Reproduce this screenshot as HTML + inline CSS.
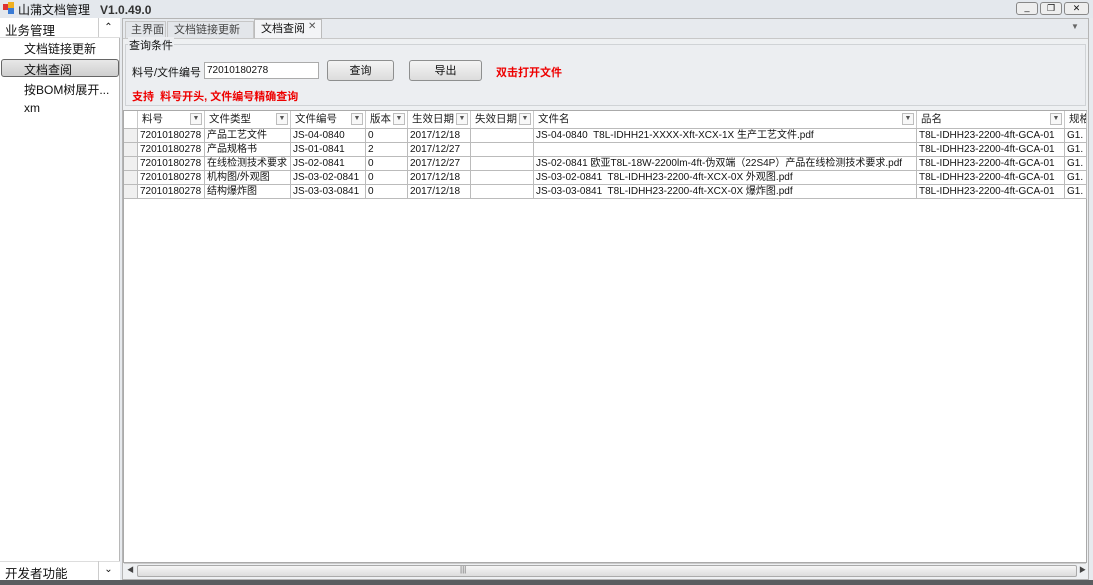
<!DOCTYPE html>
<html><head><meta charset="utf-8"><style>
*{box-sizing:border-box;margin:0;padding:0}
body{width:1093px;height:585px;overflow:hidden;background:#e7eaee;font-family:"Liberation Sans","Noto Sans CJK SC",sans-serif;font-size:11px;color:#111;position:relative}
.a{position:absolute}
.btn{position:absolute;border:1px solid #8e8f8f;border-radius:3px;background:linear-gradient(#f4f4f4,#dcdcdc);text-align:center;line-height:20px;font-size:11px}
.hd{position:absolute;top:111px;height:17px;border-right:1px solid #c9c9c9;line-height:16px;padding-left:4px;background:#fff;font-size:10.5px;color:#222}
.dd{position:absolute;right:2px;top:2px;width:12px;height:12px;border:1px solid #bdbdbd;background:#f8f8f8;font-size:7px;line-height:10px;text-align:center;color:#555}
.cell{position:absolute;height:14px;border-right:1px solid #bbb;border-bottom:1px solid #bbb;line-height:13px;padding-left:2px;white-space:nowrap;overflow:hidden;font-size:10px}
</style></head><body>
<div class="a" style="left:0;top:0;width:1093px;height:18px;background:#e4e8ed"></div>
<div class="a" style="left:3px;top:4px;width:6px;height:6px;background:#d33"></div>
<div class="a" style="left:8px;top:2px;width:6px;height:6px;background:#f0b020"></div>
<div class="a" style="left:8px;top:8px;width:6px;height:6px;background:#3a7bd5"></div>
<div class="a" style="left:18px;top:1px;font-size:12px">山蒲文档管理&nbsp;&nbsp;&nbsp;<b style="color:#333">V1.0.49.0</b></div>
<div class="a" style="left:1016px;top:2px;width:22px;height:13px;border:1px solid #888;border-radius:3px;background:#eee;font-size:9px;text-align:center;line-height:9px">_</div>
<div class="a" style="left:1040px;top:2px;width:22px;height:13px;border:1px solid #888;border-radius:3px;background:#eee;font-size:9px;text-align:center;line-height:11px">❐</div>
<div class="a" style="left:1064px;top:2px;width:25px;height:13px;border:1px solid #888;border-radius:3px;background:#eee;font-size:9px;text-align:center;line-height:11px">✕</div>
<div class="a" style="left:0;top:18px;width:120px;height:562px;background:#fff;border-right:1px solid #b8b8b8"></div>
<div class="a" style="left:0;top:18px;width:120px;height:20px;background:#fff;border-bottom:1px solid #ddd"></div>
<div class="a" style="left:5px;top:20px;font-size:12.5px">业务管理</div>
<div class="a" style="left:98px;top:18px;width:20px;height:19px;border-left:1px solid #ccc;text-align:center;font-size:10px;line-height:19px">⌃</div>
<div class="a" style="left:24px;top:40px;font-size:12px">文档链接更新</div>
<div class="a" style="left:1px;top:59px;width:118px;height:18px;border:1px solid #666;border-radius:3px;background:linear-gradient(#e8e8e8,#cfcfcf)"></div>
<div class="a" style="left:24px;top:61px;font-size:12px">文档查阅</div>
<div class="a" style="left:24px;top:81px;font-size:12px">按BOM树展开...</div>
<div class="a" style="left:24px;top:101px;font-size:12px">xm</div>
<div class="a" style="left:0;top:561px;width:120px;height:19px;border-top:1px solid #ddd;background:#fff"></div>
<div class="a" style="left:5px;top:563px;font-size:12.5px">开发者功能</div>
<div class="a" style="left:98px;top:561px;width:20px;height:19px;border-left:1px solid #ccc;text-align:center;font-size:10px;line-height:17px">⌄</div>
<div class="a" style="left:122px;top:18px;width:967px;height:562px;background:#e7eaee;border:1px solid #b5b5b5"></div>
<div class="a" style="left:125px;top:21px;width:41px;height:17px;border:1px solid #c6c6c6;border-bottom:none;background:#e3e6ea;padding-left:5px;line-height:17px;color:#444">主界面</div>
<div class="a" style="left:167px;top:21px;width:87px;height:17px;border:1px solid #c6c6c6;border-bottom:none;background:#e3e6ea;padding-left:6px;line-height:17px;color:#444">文档链接更新</div>
<div class="a" style="left:254px;top:19px;width:68px;height:20px;border:1px solid #bbb;border-bottom:none;background:#f3f4f6;padding-left:6px;line-height:19px;white-space:nowrap">文档查阅</div>
<div class="a" style="left:308px;top:21px;color:#555;font-size:10px">✕</div>
<div class="a" style="left:1071px;top:22px;font-size:8px;color:#666">▼</div>
<div class="a" style="left:123px;top:38px;width:965px;height:541px;background:#eef0f2;border-top:1px solid #c8c8c8"></div>
<div class="a" style="left:125px;top:44px;width:961px;height:62px;border:1px solid #d0d3d6;background:#eceef1"></div>
<div class="a" style="left:128px;top:37px;background:#eceef1;padding:0 1px">查询条件</div>
<div class="a" style="left:132px;top:64px">料号/文件编号</div>
<div class="a" style="left:204px;top:62px;width:115px;height:17px;border:1px solid #ababab;background:#fff;padding-left:2px;line-height:15px;font-size:10px">72010180278</div>
<div class="btn" style="left:327px;top:60px;width:67px;height:21px">查询</div>
<div class="btn" style="left:409px;top:60px;width:73px;height:21px">导出</div>
<div class="a" style="left:496px;top:64px;color:#e00;font-weight:bold">双击打开文件</div>
<div class="a" style="left:132px;top:88px;color:#e00;font-weight:bold">支持&nbsp; 料号开头, 文件编号精确查询</div>
<div class="a" style="left:123px;top:110px;width:964px;height:453px;background:#fff;border:1px solid #aaa"></div>
<div class="hd" style="left:124px;width:14px"></div>
<div class="hd" style="left:138px;width:67px">料号<div class="dd">▼</div></div>
<div class="hd" style="left:205px;width:86px">文件类型<div class="dd">▼</div></div>
<div class="hd" style="left:291px;width:75px">文件编号<div class="dd">▼</div></div>
<div class="hd" style="left:366px;width:42px">版本<div class="dd">▼</div></div>
<div class="hd" style="left:408px;width:63px">生效日期<div class="dd">▼</div></div>
<div class="hd" style="left:471px;width:63px">失效日期<div class="dd">▼</div></div>
<div class="hd" style="left:534px;width:383px">文件名<div class="dd">▼</div></div>
<div class="hd" style="left:917px;width:148px">品名<div class="dd">▼</div></div>
<div class="hd" style="left:1065px;width:22px;overflow:hidden;white-space:nowrap">规格</div>
<div class="a" style="left:124px;top:128px;width:963px;height:1px;background:#bbb"></div>
<div id="rows"></div>
<script>
var d=[["产品工艺文件","JS-04-0840","0","2017/12/18","JS-04-0840&nbsp; T8L-IDHH21-XXXX-Xft-XCX-1X 生产工艺文件.pdf"],
["产品规格书","JS-01-0841","2","2017/12/27",""],
["在线检测技术要求","JS-02-0841","0","2017/12/27","JS-02-0841 欧亚T8L-18W-2200lm-4ft-伪双端（22S4P）产品在线检测技术要求.pdf"],
["机构图/外观图","JS-03-02-0841","0","2017/12/18","JS-03-02-0841&nbsp; T8L-IDHH23-2200-4ft-XCX-0X 外观图.pdf"],
["结构爆炸图","JS-03-03-0841","0","2017/12/18","JS-03-03-0841&nbsp; T8L-IDHH23-2200-4ft-XCX-0X 爆炸图.pdf"]];
var cols=[[124,14],[138,67],[205,86],[291,75],[366,42],[408,63],[471,63],[534,383],[917,148],[1065,22]];
var h="";
d.forEach(function(r,i){var y=129+i*14;var v=["","72010180278",r[0],r[1],r[2],r[3],"",r[4],"T8L-IDHH23-2200-4ft-GCA-01","G1."];
cols.forEach(function(c,j){h+='<div class="cell" style="left:'+c[0]+'px;top:'+y+'px;width:'+c[1]+'px;'+(j==0?'background:#f0f0f0;':'')+'">'+v[j]+'</div>';});});
document.getElementById("rows").innerHTML=h;
</script>
<div class="a" style="left:124px;top:563px;width:962px;height:15px;background:#eef0f2;border-top:1px solid #ccc"></div>
<div class="a" style="left:127px;top:565px;font-size:7px;color:#444">◀</div>
<div class="a" style="left:137px;top:565px;width:940px;height:12px;border:1px solid #aaa;border-radius:2px;background:linear-gradient(#f6f6f6,#dcdcdc)"></div>
<div class="a" style="left:460px;top:565px;font-size:8px;color:#666">|||</div>
<div class="a" style="left:1079px;top:565px;font-size:7px;color:#444">▶</div>
<div class="a" style="left:0;top:580px;width:1093px;height:5px;background:#5a5d60"></div>
</body></html>
